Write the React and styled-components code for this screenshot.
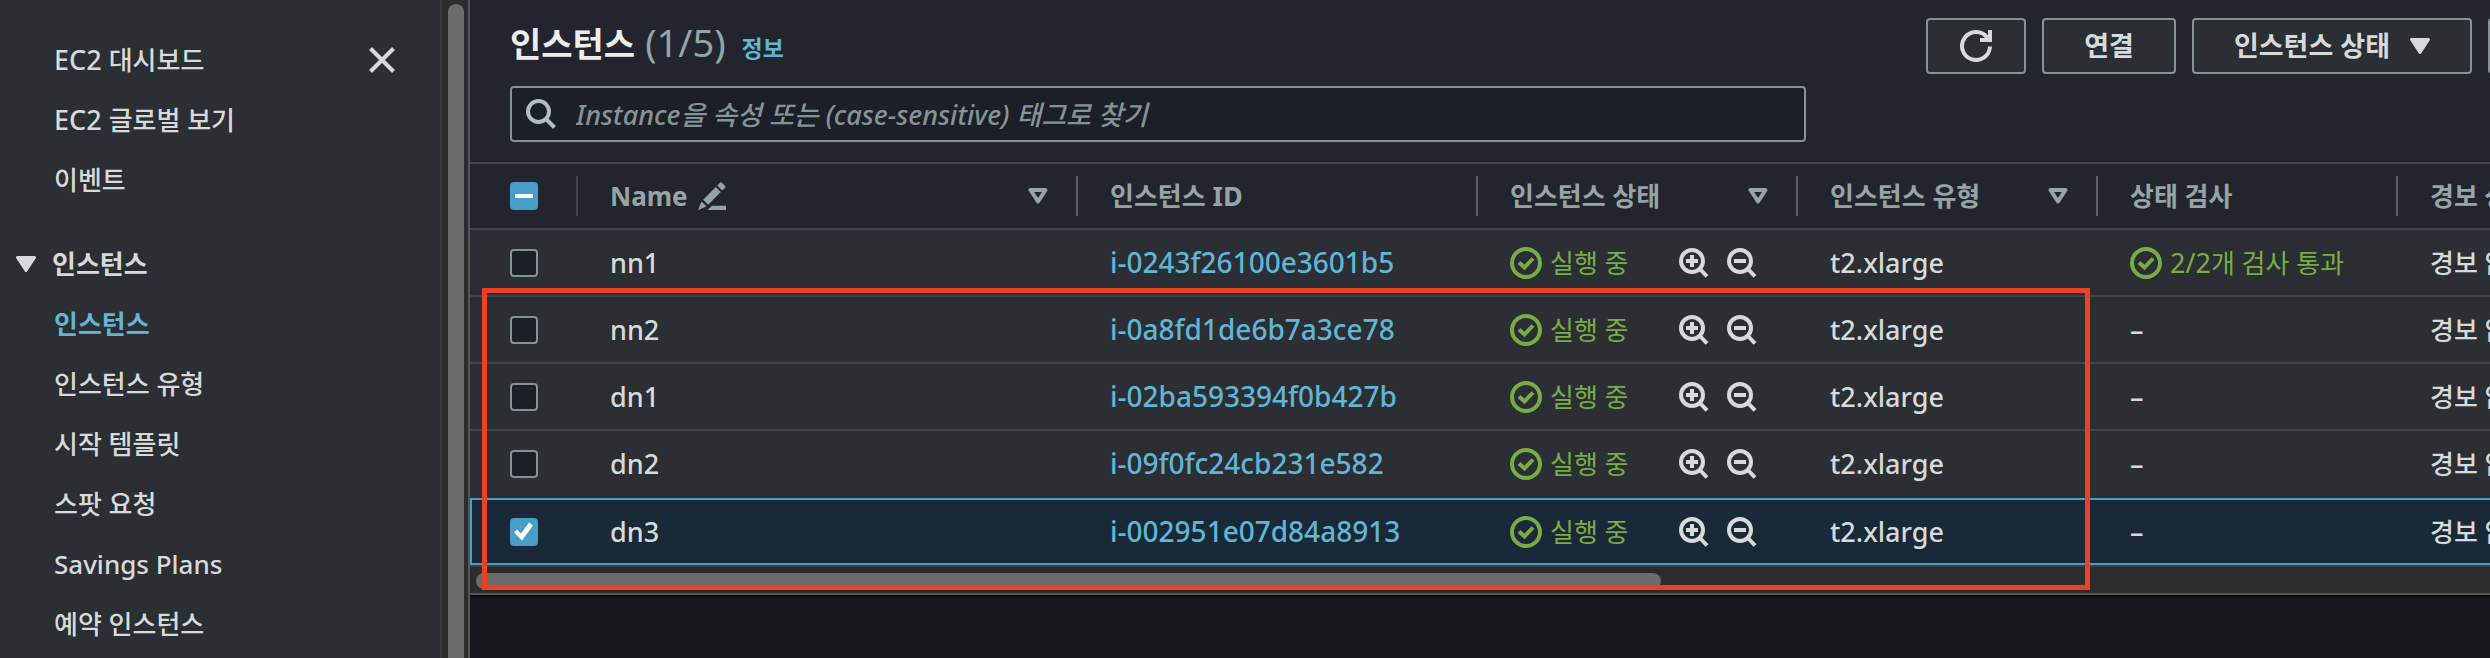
import React, { useEffect, useRef } from 'react';
import styled, { createGlobalStyle, css } from 'styled-components';

const c = {
  page: '#17181d',
  panel: '#22252d',
  surface: '#2b2e33',
  field: '#1b1f28',
  line: '#40444d',
  divider: '#5b6068',
  control: '#869393',
  text: '#d6dadb',
  strong: '#ebedee',
  muted: '#97a4a5',
  link: '#61b5d5',
  accent: '#479fc9',
  ok: '#78ad45',
  selected: '#1a2938',
  track: '#2c2c2c',
  thumb: '#6b6b6b',
  mark: '#ec4127',
};

const GlobalStyle = createGlobalStyle`
  *, *::before, *::after { box-sizing: border-box; }
  body {
    margin: 0;
    background: ${c.page};
    color: ${c.text};
    font: 500 26px/40px "Noto Sans", "Noto Sans CJK KR", sans-serif;
  }
  button, input { font: inherit; color: inherit; }
  svg { display: block; flex: none; }
`;

const Page = styled.div`
  display: flex;
  height: 100vh;
  overflow: hidden;
`;

const Sidebar = styled.aside`
  display: flex;
  flex: none;
  width: 470px;
  background: ${c.surface};
`;

const SidebarBody = styled.div`
  flex: 1;
  display: flex;
  align-items: flex-start;
  justify-content: space-between;
  padding: 40px 45px 0 16px;
  overflow: hidden;
`;

const VerticalTrack = styled.div`
  width: 30px;
  padding: 4px 4px 0 6px;
  background: ${c.track};
  border-left: 2px solid #3c3c3c;
  border-right: 2px solid #555;
`;

const VerticalThumb = styled.div`
  width: 16px;
  height: 100%;
  border-radius: 8px 8px 0 0;
  background: ${c.thumb};
`;

const NavList = styled.ul`
  display: flex;
  flex-direction: column;
  gap: 20px;
  margin: 0;
  padding: 0 0 0 38px;
  list-style: none;
`;

const NavLink = styled.a`
  display: block;
  color: ${p => (p.$current ? c.link : c.text)};
  font-weight: ${p => (p.$current ? 700 : 500)};
  text-decoration: none;
  white-space: nowrap;
`;

const NavGroupButton = styled.button`
  display: flex;
  align-items: center;
  gap: 16px;
  margin: 44px 0 20px;
  padding: 0;
  border: 0;
  background: none;
  font-weight: 700;
`;

const CloseButton = styled.button`
  display: grid;
  place-items: center;
  height: 40px;
  padding: 0;
  border: 0;
  background: none;
`;

const Latin = styled.span`
  font-size: 27px;
  line-height: 1;
`;

const Main = styled.main`
  flex: 1;
  min-width: 0;
  overflow: hidden;
`;

const PanelHeader = styled.header`
  display: flex;
  flex-direction: column;
  gap: 12px;
  padding: 18px 0 20px 40px;
  background: ${c.panel};
  border-bottom: 2px solid ${c.line};
`;

const TitleRow = styled.div`
  display: flex;
  align-items: flex-start;
  justify-content: space-between;
  height: 56px;
`;

const TitleGroup = styled.div`
  display: flex;
  align-items: baseline;
`;

const Title = styled.h1`
  margin: 0;
  font-size: 34px;
  line-height: 52px;
  font-weight: 700;
  color: ${c.strong};
`;

const Count = styled.span`
  margin-left: 10px;
  font-size: 38px;
  line-height: 1;
  font-weight: 400;
  color: ${c.muted};
`;

const InfoLink = styled.a`
  margin-left: 16px;
  font-size: 23px;
  font-weight: 700;
  color: ${c.link};
  text-decoration: none;
`;

const Actions = styled.div`
  display: flex;
  gap: 16px;
  margin-right: -98px;
`;

const Button = styled.button`
  display: flex;
  align-items: center;
  justify-content: center;
  gap: 20px;
  height: 56px;
  min-width: 100px;
  padding: 0 ${p => (p.$icon ? 32 : 40)}px;
  border: 2px solid ${c.control};
  border-radius: 4px;
  background: ${c.surface};
  font-size: 27px;
  font-weight: 700;
  white-space: nowrap;
`;

const SearchBox = styled.label`
  display: flex;
  align-items: center;
  gap: 20px;
  width: 1296px;
  max-width: 100%;
  height: 56px;
  padding: 0 14px;
  border: 2px solid ${c.control};
  border-radius: 4px;
  background: ${c.field};
  color: #b3bebf;
`;

const SearchInput = styled.input`
  flex: 1;
  height: 48px;
  padding: 0;
  border: 0;
  outline: 0;
  background: none;
  font-size: 27px;
  &::placeholder {
    color: ${c.control};
    font-style: italic;
    opacity: 1;
  }
`;

const TableRegion = styled.section`
  position: relative;
  border-bottom: 2px solid #555;
  box-shadow: 0 2px 1px #0b0c0f;
`;

const TableClip = styled.div`
  overflow: hidden;
`;

const Table = styled.table`
  width: 2228px;
  table-layout: fixed;
  border-collapse: separate;
  border-spacing: 0;
`;

const Th = styled.th`
  height: 66px;
  padding: 0;
  background: ${c.panel};
  border-bottom: 2px solid ${c.line};
  text-align: left;
  font-weight: 700;
  color: ${c.muted};
`;

const ThInner = styled.div`
  display: flex;
  align-items: center;
  justify-content: space-between;
  height: 40px;
  padding: 0 28px 0 ${p => (p.$lead ? 40 : 32)}px;
  border-right: 2px solid ${p => (p.$lead ? c.line : c.divider)};
  line-height: 36px;
  white-space: nowrap;
`;

const Inline = styled.span`
  display: flex;
  align-items: center;
  gap: ${p => p.$gap || 8}px;
`;

const Td = styled.td`
  height: 67px;
  padding: 0 0 0 ${p => (p.$lead ? 40 : 32)}px;
  background: ${c.surface};
  border-bottom: 2px solid ${p => (p.$last ? c.surface : c.line)};
  white-space: nowrap;
  ${p =>
    p.$selected &&
    css`
      background: ${c.selected};
      border-top: 2px solid ${c.accent};
      border-bottom-color: ${c.accent};
    `}
  ${p =>
    p.$selected &&
    p.$lead &&
    css`
      padding-left: 38px;
      border-left: 2px solid ${c.accent};
    `}
`;

const IdLink = styled.a`
  font-size: 28px;
  line-height: 1;
  color: ${c.link};
  text-decoration: none;
`;

const Status = styled.span`
  display: flex;
  align-items: center;
  gap: 8px;
  color: ${c.ok};
  font-weight: 400;
`;

const IconButton = styled.button`
  padding: 0;
  border: 0;
  background: none;
`;

const Checkbox = styled.input`
  appearance: none;
  display: grid;
  place-items: center;
  width: 28px;
  height: 28px;
  margin: 0;
  border: 2px solid ${c.control};
  border-radius: 4px;
  background: ${c.field};
  &:checked, &:indeterminate {
    border: 0;
    background: ${c.accent};
  }
  &:checked::before {
    content: "";
    width: 28px;
    height: 28px;
    background: #fff;
    clip-path: polygon(4px 15px, 7px 12px, 11px 16px, 19px 5px, 23px 8px, 12px 23px);
  }
  &:indeterminate::before {
    content: "";
    width: 18px;
    height: 4px;
    background: #fff;
  }
`;

const HorizontalTrack = styled.div`
  height: 28px;
  padding: 6px;
  border-top: 2px solid #3e3e3e;
  background: ${c.track};
`;

const HorizontalThumb = styled.div`
  width: 59%;
  height: 16px;
  border-radius: 8px;
  background: ${c.thumb};
`;

const Highlight = styled.div`
  position: absolute;
  top: 124px;
  bottom: 3px;
  left: 12px;
  width: 1608px;
  border: 5px solid ${c.mark};
  pointer-events: none;
`;

const Caret = () => (
  <svg width="20" height="16" viewBox="0 0 20 16" aria-hidden="true">
    <path d="M1.5 1.5h17L10 14.5z" fill="currentColor" stroke="currentColor" strokeWidth="3" strokeLinejoin="round" />
  </svg>
);

const SortIcon = () => (
  <svg width="20" height="16" viewBox="0 0 20 16" aria-hidden="true">
    <path d="M2.5 2h15L10 13.5z" fill="none" stroke="currentColor" strokeWidth="4" strokeLinejoin="round" />
  </svg>
);

const CloseIcon = () => (
  <svg width="26" height="26" viewBox="0 0 26 26" aria-hidden="true">
    <path d="M1.5 1.5l23 23M24.5 1.5l-23 23" stroke="currentColor" strokeWidth="4" />
  </svg>
);

const RefreshIcon = () => (
  <svg width="32" height="32" viewBox="0 0 32 32" fill="none" stroke="currentColor" strokeWidth="4" aria-hidden="true">
    <path d="M30 16.5A14 14 0 1 1 27.5 8" />
    <path d="M30 0v10H20" />
  </svg>
);

const SearchIcon = () => (
  <svg width="30" height="30" viewBox="0 0 30 30" fill="none" stroke="currentColor" strokeWidth="4" aria-hidden="true">
    <circle cx="12.5" cy="12.5" r="10.5" />
    <path d="M19.5 19.5l9 9" />
  </svg>
);

const ZoomIcon = ({ plus }) => (
  <svg width="30" height="30" viewBox="0 0 30 30" fill="none" stroke="currentColor" strokeWidth="4" aria-hidden="true">
    <circle cx="13" cy="13" r="11" />
    <path d="M20.5 20.5l7.5 8" />
    <path d={plus ? 'M7 13h12M13 7v12' : 'M7 13h12'} />
  </svg>
);

const CheckCircle = () => (
  <svg width="32" height="32" viewBox="0 0 32 32" fill="none" stroke="currentColor" strokeWidth="4" aria-hidden="true">
    <circle cx="16" cy="16" r="14" />
    <path d="M9 15.5l5.5 5L23 11.5" />
  </svg>
);

const EditIcon = () => (
  <svg width="28" height="28" viewBox="0 0 28 28" fill="currentColor" aria-hidden="true">
    <path d="M0 28l3.5-8.5 5 5z" />
    <path d="M5.2 17.8L17.8 5l5 5L10.2 22.8z" />
    <path d="M19.3 3.4l2.6-2.6q1-1 2 0l3 3q1 1 0 2l-2.6 2.6z" />
    <path d="M9.5 28l4.5-4.3h14V28z" />
  </svg>
);

const topLinks = [
  ['EC2', '대시보드'],
  ['EC2', '글로벌 보기'],
  ['', '이벤트'],
];

const instanceLinks = [
  ['', '인스턴스'],
  ['', '인스턴스 유형'],
  ['', '시작 템플릿'],
  ['', '스팟 요청'],
  ['', 'Savings Plans'],
  ['', '예약 인스턴스'],
];

const rows = [
  { name: 'nn1', id: 'i-0243f26100e3601b5', passed: true },
  { name: 'nn2', id: 'i-0a8fd1de6b7a3ce78' },
  { name: 'dn1', id: 'i-02ba593394f0b427b' },
  { name: 'dn2', id: 'i-09f0fc24cb231e582' },
  { name: 'dn3', id: 'i-002951e07d84a8913', selected: true },
];

const columnWidths = [108, 500, 400, 320, 300, 300, 300];

function NavItem({ latin, label, current }) {
  return (
    <li>
      <NavLink href="#" $current={current} aria-current={current ? 'page' : undefined}>
        {latin && <Latin>{latin} </Latin>}
        {label}
      </NavLink>
    </li>
  );
}

function SelectAll() {
  const ref = useRef(null);
  useEffect(() => {
    ref.current.indeterminate = true;
  }, []);
  return <Checkbox ref={ref} type="checkbox" aria-label="모두 선택" />;
}

function InstanceRow({ row, last }) {
  const cell = { $selected: row.selected, $last: last };
  return (
    <tr>
      <Td {...cell} $lead>
        <Checkbox type="checkbox" defaultChecked={row.selected} aria-label={row.name} />
      </Td>
      <Td {...cell}><Latin>{row.name}</Latin></Td>
      <Td {...cell}><IdLink href="#">{row.id}</IdLink></Td>
      <Td {...cell}>
        <Inline $gap={50}>
          <Status><CheckCircle />실행 중</Status>
          <Inline $gap={18}>
            <IconButton aria-label="필터 추가"><ZoomIcon plus /></IconButton>
            <IconButton aria-label="필터 제외"><ZoomIcon /></IconButton>
          </Inline>
        </Inline>
      </Td>
      <Td {...cell}><Latin>t2.xlarge</Latin></Td>
      <Td {...cell}>
        {row.passed ? (
          <Status><CheckCircle /><span><Latin>2/2</Latin>개 검사 통과</span></Status>
        ) : (
          <Latin>–</Latin>
        )}
      </Td>
      <Td {...cell}>경보 없음</Td>
    </tr>
  );
}

export default function App() {
  return (
    <Page>
      <GlobalStyle />
      <Sidebar>
        <SidebarBody>
          <nav>
            <NavList>
              {topLinks.map(([latin, label]) => (
                <NavItem key={label} latin={latin} label={label} />
              ))}
            </NavList>
            <NavGroupButton aria-expanded="true"><Caret />인스턴스</NavGroupButton>
            <NavList>
              {instanceLinks.map(([latin, label], i) => (
                <NavItem key={label} latin={latin} label={label} current={i === 0} />
              ))}
            </NavList>
          </nav>
          <CloseButton aria-label="닫기"><CloseIcon /></CloseButton>
        </SidebarBody>
        <VerticalTrack><VerticalThumb /></VerticalTrack>
      </Sidebar>
      <Main>
        <PanelHeader>
          <TitleRow>
            <TitleGroup>
              <Title>인스턴스<Count>(1/5)</Count></Title>
              <InfoLink href="#">정보</InfoLink>
            </TitleGroup>
            <Actions>
              <Button $icon aria-label="새로 고침"><RefreshIcon /></Button>
              <Button>연결</Button>
              <Button>인스턴스 상태<Caret /></Button>
              <Button aria-label="작업" />
            </Actions>
          </TitleRow>
          <SearchBox>
            <SearchIcon />
            <SearchInput
              type="text"
              aria-label="인스턴스 검색"
              placeholder="Instance을 속성 또는 (case-sensitive) 태그로 찾기"
            />
          </SearchBox>
        </PanelHeader>
        <TableRegion>
          <TableClip>
            <Table>
              <colgroup>
                {columnWidths.map((w, i) => <col key={i} width={w} />)}
              </colgroup>
              <thead>
                <tr>
                  <Th><ThInner $lead><SelectAll /></ThInner></Th>
                  <Th>
                    <ThInner>
                      <Inline $gap={10}>Name<EditIcon /></Inline>
                      <SortIcon />
                    </ThInner>
                  </Th>
                  <Th><ThInner><span>인스턴스 <Latin>ID</Latin></span></ThInner></Th>
                  <Th><ThInner>인스턴스 상태<SortIcon /></ThInner></Th>
                  <Th><ThInner>인스턴스 유형<SortIcon /></ThInner></Th>
                  <Th><ThInner>상태 검사</ThInner></Th>
                  <Th><ThInner>경보 상태</ThInner></Th>
                </tr>
              </thead>
              <tbody>
                {rows.map((row, i) => (
                  <InstanceRow key={row.id} row={row} last={i === rows.length - 2} />
                ))}
              </tbody>
            </Table>
          </TableClip>
          <HorizontalTrack><HorizontalThumb /></HorizontalTrack>
          <Highlight />
        </TableRegion>
      </Main>
    </Page>
  );
}
